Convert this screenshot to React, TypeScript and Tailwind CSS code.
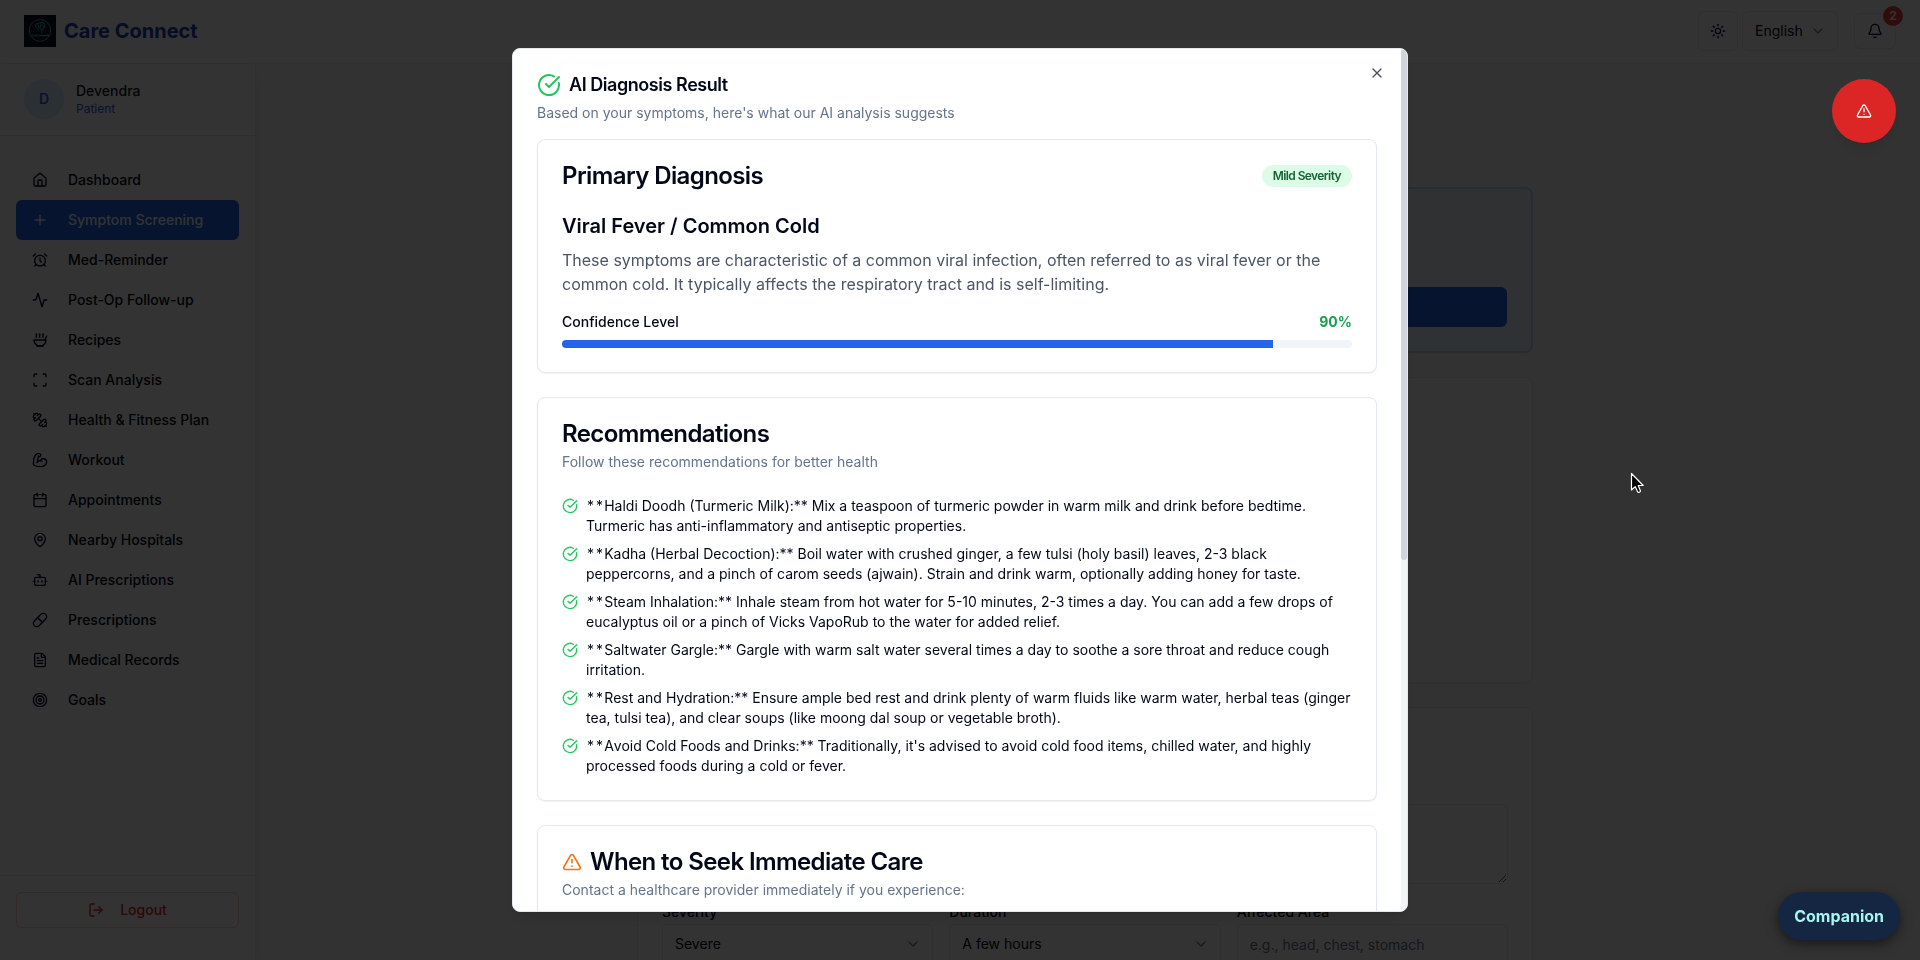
import type { ReactNode } from "react";
import {
  Activity,
  AlarmClock,
  Bell,
  BicepsFlexed,
  Bot,
  Calendar,
  ChevronDown,
  CircleCheckBig,
  FileText,
  House,
  LogOut,
  MapPin,
  Pill,
  Plus,
  Scan,
  Soup,
  Sun,
  Target,
  TriangleAlert,
  X,
} from "lucide-react";

type IconComponent = (props: { className?: string }) => ReactNode;

function Dumbbells({ className }: { className?: string }) {
  return (
    <svg
      viewBox="0 0 24 24"
      className={className}
      fill="none"
      stroke="currentColor"
      strokeWidth="2"
      strokeLinecap="round"
      strokeLinejoin="round"
      aria-hidden="true"
    >
      <path d="M14.4 14.4 9.6 9.6" />
      <path d="M18.657 21.485a2 2 0 1 1-2.829-2.828l-1.767 1.768a2 2 0 1 1-2.829-2.829l6.364-6.364a2 2 0 1 1 2.829 2.829l-1.768 1.767a2 2 0 1 1 2.828 2.829z" />
      <path d="m21.5 21.5-1.4-1.4" />
      <path d="M3.9 3.9 2.5 2.5" />
      <path d="M6.404 12.768a2 2 0 1 1-2.829-2.829l1.768-1.767a2 2 0 1 1-2.828-2.829l2.828-2.828a2 2 0 1 1 2.829 2.828l1.767-1.768a2 2 0 1 1 2.829 2.829z" />
    </svg>
  );
}

const navItems: { label: string; icon: IconComponent | typeof House; active?: boolean }[] = [
  { label: "Dashboard", icon: House },
  { label: "Symptom Screening", icon: Plus, active: true },
  { label: "Med-Reminder", icon: AlarmClock },
  { label: "Post-Op Follow-up", icon: Activity },
  { label: "Recipes", icon: Soup },
  { label: "Scan Analysis", icon: Scan },
  { label: "Health & Fitness Plan", icon: Dumbbells },
  { label: "Workout", icon: BicepsFlexed },
  { label: "Appointments", icon: Calendar },
  { label: "Nearby Hospitals", icon: MapPin },
  { label: "AI Prescriptions", icon: Bot },
  { label: "Prescriptions", icon: Pill },
  { label: "Medical Records", icon: FileText },
  { label: "Goals", icon: Target },
];

const recommendations = [
  "**Haldi Doodh (Turmeric Milk):** Mix a teaspoon of turmeric powder in warm milk and drink before bedtime. Turmeric has anti-inflammatory and antiseptic properties.",
  "**Kadha (Herbal Decoction):** Boil water with crushed ginger, a few tulsi (holy basil) leaves, 2-3 black peppercorns, and a pinch of carom seeds (ajwain). Strain and drink warm, optionally adding honey for taste.",
  "**Steam Inhalation:** Inhale steam from hot water for 5-10 minutes, 2-3 times a day. You can add a few drops of eucalyptus oil or a pinch of Vicks VapoRub to the water for added relief.",
  "**Saltwater Gargle:** Gargle with warm salt water several times a day to soothe a sore throat and reduce cough irritation.",
  "**Rest and Hydration:** Ensure ample bed rest and drink plenty of warm fluids like warm water, herbal teas (ginger tea, tulsi tea), and clear soups (like moong dal soup or vegetable broth).",
  "**Avoid Cold Foods and Drinks:** Traditionally, it's advised to avoid cold food items, chilled water, and highly processed foods during a cold or fever.",
];

function Logo() {
  return (
    <svg viewBox="0 0 32 32" className="size-8" aria-hidden="true">
      <rect width="32" height="32" fill="#0a1020" />
      <circle cx="16" cy="15.5" r="10.8" fill="none" stroke="#8b9aa0" strokeWidth="0.9" />
      <path
        d="M12 12c-1.500-2 .5-4.500 3-3.500 1-1.500 4-1.500 5 0 1.500 1.500.8 3.500-.7 4.500M13.500 9.500c1 .5 1.500 1.500 1.200 3M17 8.500l-1.200 5 2.500 1.500-1 3M12 12l2.500 3M18.500 10l2 2.500-2.300 2.500"
        fill="none"
        stroke="#1fa5a5"
        strokeWidth="1.100"
        strokeLinecap="round"
        strokeLinejoin="round"
      />
      <path d="M6.500 20.500h10" stroke="#1c7f84" strokeWidth="1.800" />
      <path d="M16 20.500h9.500" stroke="#8b9aa0" strokeWidth="1.400" />
    </svg>
  );
}

function Header() {
  return (
    <header className="flex h-16 shrink-0 items-center justify-between border-b border-[#e2e8f0] bg-white px-6 pb-px">
      <div className="flex items-center gap-2">
        <Logo />
        <span className="text-xl font-bold text-[#1e40af]">Care Connect</span>
      </div>
      <div className="flex items-center gap-4">
        <div className="flex items-center gap-1">
          <button
            type="button"
            aria-label="Toggle theme"
            className="flex size-10 items-center justify-center rounded-md border border-[#e2e8f0] bg-white"
          >
            <Sun className="size-4" />
          </button>
          <div className="relative">
            <select
              aria-label="Language"
              className="h-10 w-24 appearance-none rounded-md border border-[#e2e8f0] bg-white px-3 text-sm"
            >
              <option>English</option>
            </select>
            <ChevronDown className="pointer-events-none absolute top-3 right-3 size-4 opacity-50" />
          </div>
        </div>
        <button
          type="button"
          aria-label="Notifications"
          className="relative flex h-9 w-[42px] items-center justify-center rounded-md border border-[#e2e8f0] bg-white"
        >
          <Bell className="size-4" />
          <span className="absolute -top-2 -right-2 flex size-5 items-center justify-center rounded-full bg-[#ef4444] text-xs font-semibold text-white">
            2
          </span>
        </button>
      </div>
    </header>
  );
}

function Sidebar() {
  return (
    <aside className="z-10 flex w-64 shrink-0 flex-col border-r border-[#e5e7eb] bg-white shadow-lg">
      <div className="flex items-center gap-3 border-b border-[#e5e7eb] px-6 pt-[15px] pb-4">
        <div className="flex size-10 items-center justify-center rounded-full bg-[#dbeafe] text-sm font-semibold text-[#2563eb]">
          D
        </div>
        <div>
          <p className="text-sm font-medium text-[#111827]">Devendra</p>
          <p className="text-xs text-[#2563eb]">Patient</p>
        </div>
      </div>
      <nav className="flex flex-1 flex-col px-4 pt-6">
        {navItems.map(({ label, icon: Icon, active }) => (
          <a
            key={label}
            href="#"
            className={
              active
                ? "flex h-10 items-center gap-5 rounded-md bg-[#2563eb] px-4 text-sm font-medium text-white"
                : "flex h-10 items-center gap-5 rounded-md px-4 text-sm font-medium text-[#020817]"
            }
          >
            <Icon className="size-4" />
            {label}
          </a>
        ))}
      </nav>
      <div className="border-t border-[#e5e7eb] px-4 pt-4 pb-8">
        <button
          type="button"
          className="flex h-9 w-full items-center justify-center gap-4 rounded-md border border-[#fecaca] bg-white text-sm font-medium text-[#dc2626]"
        >
          <LogOut className="size-4" />
          Logout
        </button>
      </div>
    </aside>
  );
}

function SelectField({ id, label, value }: { id: string; label: string; value: string }) {
  return (
    <div>
      <label htmlFor={id} className="block text-sm leading-6 font-medium">
        {label}
      </label>
      <div className="relative">
        <select
          id={id}
          className="h-10 w-full appearance-none rounded-md border border-[#e2e8f0] bg-white px-3 text-sm"
        >
          <option>{value}</option>
        </select>
        <ChevronDown className="pointer-events-none absolute top-3 right-3 size-4 opacity-50" />
      </div>
    </div>
  );
}

function ScreeningPage() {
  return (
    <main className="flex-1 overflow-hidden bg-[#f9fafb] pt-[123px] pr-[6px]">
      <div className="mx-auto flex max-w-4xl flex-col gap-6">
        <section className="flex min-h-[166px] flex-col justify-end rounded-lg border-2 border-[#bfdbfe] bg-[#eff6ff] p-6 shadow-xs">
          <button type="button" aria-label="Start" className="h-10 w-full rounded-md bg-[#2563eb]" />
        </section>
        <section className="min-h-[306px] rounded-lg border border-[#e2e8f0] bg-white shadow-xs" />
        <section className="rounded-lg border border-[#e2e8f0] bg-white px-6 pt-24 pb-6 shadow-xs">
          <textarea
            aria-label="Symptoms"
            className="block h-20 w-full rounded-md border border-[#e2e8f0] bg-white px-3 py-2 text-sm"
          />
          <div className="mt-4 grid grid-cols-3 gap-4">
            <SelectField id="severity" label="Severity" value="Severe" />
            <SelectField id="duration" label="Duration" value="A few hours" />
            <div>
              <label htmlFor="area" className="block text-sm leading-6 font-medium">
                Affected Area
              </label>
              <input
                id="area"
                type="text"
                placeholder="e.g., head, chest, stomach"
                className="h-10 w-full rounded-md border border-[#e2e8f0] bg-white px-3 text-sm placeholder:text-[#64748b]"
              />
            </div>
          </div>
        </section>
      </div>
    </main>
  );
}

function Card({ children }: { children: ReactNode }) {
  return (
    <section className="rounded-lg border border-[#e2e8f0] bg-white p-6 shadow-xs">{children}</section>
  );
}

function DiagnosisDialog() {
  return (
    <div
      role="dialog"
      aria-modal="true"
      aria-labelledby="dialog-title"
      className="flex h-[90vh] w-full max-w-4xl overflow-hidden rounded-lg border border-[#e2e8f0] bg-white shadow-lg"
    >
      <div className="relative flex-1 overflow-y-auto p-6 [scrollbar-width:none]">
        <button type="button" aria-label="Close" className="absolute top-4 right-4 opacity-70">
          <X className="size-4" />
        </button>
        <div className="flex flex-col gap-1.5">
          <h2
            id="dialog-title"
            className="flex h-6 items-center gap-2 text-lg leading-none font-semibold tracking-tight"
          >
            <CircleCheckBig className="size-6 text-[#22c55e]" />
            AI Diagnosis Result
          </h2>
          <p className="text-sm text-[#64748b]">
            Based on your symptoms, here's what our AI analysis suggests
          </p>
        </div>

        <div className="mt-4 flex flex-col gap-6">
          <Card>
            <h3 className="flex items-center justify-between text-2xl leading-none font-semibold tracking-tight">
              Primary Diagnosis
              <span className="rounded-full border border-transparent bg-[#dcfce7] px-2.5 py-0.5 text-xs font-semibold text-[#166534]">
                Mild Severity
              </span>
            </h3>
            <h4 className="mt-6 text-xl font-semibold">Viral Fever / Common Cold</h4>
            <p className="mt-2 text-base text-[#4b5563]">
              These symptoms are characteristic of a common viral infection, often referred to as viral
              fever or the common cold. It typically affects the respiratory tract and is self-limiting.
            </p>
            <div className="mt-4 flex items-center justify-between text-sm">
              <span className="font-medium">Confidence Level</span>
              <span className="font-bold text-[#16a34a]">90%</span>
            </div>
            <div
              role="progressbar"
              aria-label="Confidence Level"
              aria-valuenow={90}
              className="mt-2 h-2 overflow-hidden rounded-full bg-[#f1f5f9]"
            >
              <div className="h-full w-[90%] bg-[#2563eb]" />
            </div>
          </Card>

          <Card>
            <h3 className="text-2xl leading-none font-semibold tracking-tight">Recommendations</h3>
            <p className="mt-1.5 text-sm text-[#64748b]">Follow these recommendations for better health</p>
            <ul className="mt-6 flex flex-col gap-2">
              {recommendations.map((text) => (
                <li key={text} className="flex items-start gap-2 text-sm">
                  <CircleCheckBig className="mt-0.5 size-4 shrink-0 text-[#22c55e]" />
                  <p className="first-letter:tabular-nums">{text}</p>
                </li>
              ))}
            </ul>
          </Card>

          <Card>
            <h3 className="flex items-center gap-2 text-2xl leading-none font-semibold tracking-tight">
              <TriangleAlert className="size-5 text-[#f97316]" />
              When to Seek Immediate Care
            </h3>
            <p className="mt-1.5 text-sm text-[#64748b]">
              Contact a healthcare provider immediately if you experience:
            </p>
          </Card>
        </div>
      </div>
      <div className="w-[6px] shrink-0 bg-[#f3f4f6]" aria-hidden="true">
        <div className="h-[59.3%] rounded-full bg-[#d1d5db]" />
      </div>
    </div>
  );
}

export default function App() {
  return (
    <div className="relative flex h-screen flex-col overflow-hidden font-['Inter',sans-serif] text-[#020817]">
      <Header />
      <div className="flex min-h-0 flex-1">
        <Sidebar />
        <ScreeningPage />
      </div>

      <div className="fixed inset-0 z-40 flex items-center justify-center bg-black/80">
        <DiagnosisDialog />
      </div>

      <button
        type="button"
        aria-label="Emergency"
        className="fixed top-[79px] right-6 z-50 flex size-16 items-center justify-center rounded-full bg-[#dc2626] text-white shadow-lg"
      >
        <TriangleAlert className="size-4" />
      </button>
      <button
        type="button"
        className="fixed right-5 bottom-5 z-50 h-12 rounded-full bg-[#152642] px-4 text-base font-bold text-[#a8f5f0] shadow-[0_4px_12px_rgba(0,0,0,0.5)]"
      >
        Companion
      </button>

      <svg
        viewBox="0 0 14 22"
        className="pointer-events-none fixed top-[472px] left-[1630px] z-50 h-[22px] w-[14px]"
        aria-hidden="true"
      >
        <path
          d="M1.500 1.500v16.500l3.700-3.400 2.500 5.400c.5 1 3.200.1 2.700-1.200L8.200 13.500h5z"
          fill="#000"
          stroke="#fff"
          strokeWidth="1.200"
          strokeLinejoin="round"
        />
      </svg>
    </div>
  );
}
